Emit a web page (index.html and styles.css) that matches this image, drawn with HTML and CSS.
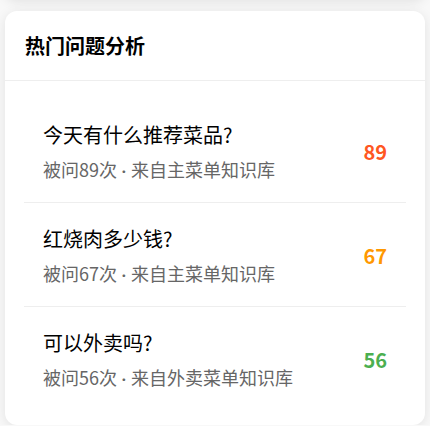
FILE: index.html
```html
<!DOCTYPE html>
<html lang="zh-CN">
<head>
<meta charset="utf-8">
<title>热门问题分析</title>
<link rel="stylesheet" href="styles.css">
</head>
<body>
<div class="page">
  <div class="card card-prev"></div>
  <section class="card">
    <header class="card-header">
      <h2 class="card-title">热门问题分析</h2>
    </header>
    <ul class="q-list">
      <li class="q-item">
        <div class="q-text">
          <div class="q-title">今天有什么推荐菜品?</div>
          <div class="q-meta">被问89次<span class="sep"> · </span>来自主菜单知识库</div>
        </div>
        <div class="q-count c-hot">89</div>
      </li>
      <li class="q-item">
        <div class="q-text">
          <div class="q-title">红烧肉多少钱?</div>
          <div class="q-meta">被问67次<span class="sep"> · </span>来自主菜单知识库</div>
        </div>
        <div class="q-count c-warm">67</div>
      </li>
      <li class="q-item">
        <div class="q-text">
          <div class="q-title">可以外卖吗?</div>
          <div class="q-meta">被问56次<span class="sep"> · </span>来自外卖菜单知识库</div>
        </div>
        <div class="q-count c-ok">56</div>
      </li>
    </ul>
  </section>
</div>
</body>
</html>
```
FILE: styles.css
```css
* { box-sizing: border-box; }
html, body { margin: 0; padding: 0; }
body {
  background: #f8f8f8;
  font-family: "Noto Sans CJK SC", "Noto Sans", sans-serif;
  color: #111;
  overflow: hidden;
}
.page {
  padding: 0 5px;
  display: flex;
  flex-direction: column;
  gap: 11px;
}
.card {
  background: #fff;
  border-radius: 12px;
  box-shadow: 0 2px 12px rgba(0, 0, 0, 0.09);
}
.card-prev {
  height: 40px;
  margin-top: -40px;
}
.card-header {
  padding: 21px 20px 20px;
  border-bottom: 1px solid #eeeeee;
}
.card-title {
  margin: 0;
  font-size: 20px;
  line-height: 28px;
  font-weight: 700;
  color: #000;
}
.q-list {
  list-style: none;
  margin: 0;
  padding: 18px 19px 15px;
}
.q-item {
  display: flex;
  align-items: center;
  justify-content: space-between;
  padding: 20px 19px;
  border-bottom: 1px solid #eeeeee;
}
.q-item:last-child { border-bottom: none; }
.q-title {
  font-size: 20px;
  line-height: 32px;
  color: #000;
}
.q-meta {
  margin-top: 5px;
  font-size: 18px;
  line-height: 26px;
  height: 26px;
  color: #666;
}
.sep {
  font-family: Lato, "Noto Sans", sans-serif;
}
.q-count {
  font-size: 20px;
  font-weight: 700;
  line-height: 26px;
  margin-top: 3px;
}
.c-hot { color: #ff5722; }
.c-warm { color: #ff9800; }
.c-ok { color: #4caf50; }
```
